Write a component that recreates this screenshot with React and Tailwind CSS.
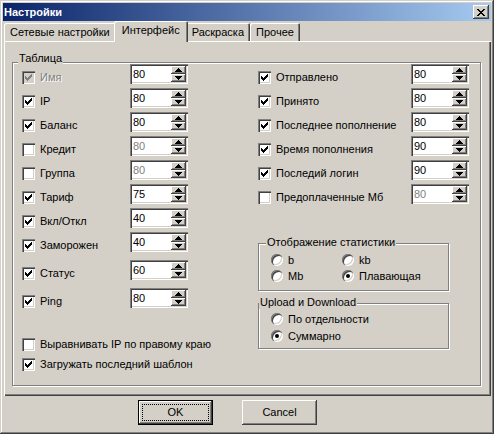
import React from "react";

const CHECK = "M0 2h1v3H0zM1 3h1v3H1zM2 4h1v3H2zM3 3h1v3H3zM4 2h1v3H4zM5 1h1v3H5zM6 0h1v3H6z";
const UP = "M3 0h1v1H3zM2 1h3v1H2zM1 2h5v1H1zM0 3h7v1H0z";
const DOWN = "M0 0h7v1H0zM1 1h5v1H1zM2 2h3v1H2zM3 3h1v1H3z";
const CROSS =
  "M0 0h2v1H0zM6 0h2v1H6zM1 1h2v1H1zM5 1h2v1H5zM2 2h4v1H2zM3 3h2v1H3zM2 4h4v1H2zM1 5h2v1H1zM5 5h2v1H5zM0 6h2v1H0zM6 6h2v1H6z";

const sunken =
  "shadow-[inset_1px_1px_0_#808080,inset_2px_2px_0_#404040,inset_-1px_-1px_0_#fff,inset_-2px_-2px_0_#d4d0c8]";
const raised =
  "shadow-[inset_-1px_-1px_0_#404040,inset_1px_1px_0_#fff,inset_-2px_-2px_0_#808080]";
const etched = "border border-[#808080] shadow-[inset_1px_1px_0_#fff,1px_1px_0_#fff]";

const leftRows = [
  { label: "Имя", value: 80, checked: true, locked: true },
  { label: "IP", value: 80, checked: true },
  { label: "Баланс", value: 80, checked: true },
  { label: "Кредит", value: 80, checked: false, off: true },
  { label: "Группа", value: 80, checked: false, off: true },
  { label: "Тариф", value: 75, checked: true },
  { label: "Вкл/Откл", value: 40, checked: true },
  { label: "Заморожен", value: 40, checked: true },
  { label: "Статус", value: 60, checked: true, gap: true },
  { label: "Ping", value: 80, checked: true, gap: true },
];

const rightRows = [
  { label: "Отправлено", value: 80, checked: true },
  { label: "Принято", value: 80, checked: true },
  { label: "Последнее пополнение", value: 80, checked: true },
  { label: "Время пополнения", value: 90, checked: true },
  { label: "Последий логин", value: 90, checked: true },
  { label: "Предоплаченные Мб", value: 80, checked: false, off: true },
];

function Check({ checked, locked }) {
  return (
    <div
      className={`w-[13px] h-[13px] shrink-0 flex items-center justify-center ${
        locked ? "bg-[#d4d0c8]" : "bg-white"
      } ${sunken}`}
    >
      {checked && (
        <svg width="7" height="7" viewBox="0 0 7 7" shapeRendering="crispEdges">
          <path d={CHECK} fill={locked ? "#808080" : "#000"} />
        </svg>
      )}
    </div>
  );
}

function Radio({ checked }) {
  return (
    <div
      className={`w-[12px] h-[12px] shrink-0 rounded-full bg-white flex items-center justify-center ${sunken}`}
    >
      {checked && <div className="w-[4px] h-[4px] rounded-full bg-black" />}
    </div>
  );
}

function SpinBtn({ d }) {
  return (
    <div className={`w-[15px] h-[8px] flex items-center justify-center bg-[#d4d0c8] ${raised}`}>
      <svg width="7" height="4" viewBox="0 0 7 4" shapeRendering="crispEdges">
        <path d={d} fill="#000" />
      </svg>
    </div>
  );
}

function Spin({ value, off }) {
  return (
    <div className={`flex w-[58px] h-[20px] shrink-0 bg-white ${sunken}`}>
      <span className={`flex-1 flex items-center pl-[3px] ${off ? "text-[#808080]" : "text-black"}`}>
        {value}
      </span>
      <div className="flex flex-col py-[2px] pr-[2px]">
        <SpinBtn d={UP} />
        <SpinBtn d={DOWN} />
      </div>
    </div>
  );
}

function Row({ row, wide }) {
  return (
    <div className={`flex items-end ${row.gap ? "mt-[4px]" : ""}`}>
      <div className={`flex items-center h-[13px] ${wide ? "w-[153px]" : "w-[108px]"}`}>
        <Check checked={row.checked} locked={row.locked} />
        <span
          className={`ml-[5px] whitespace-nowrap ${
            row.locked ? "text-[#808080] [text-shadow:1px_1px_0_#fff]" : ""
          }`}
        >
          {row.label}
        </span>
      </div>
      <Spin value={row.value} off={row.off} />
    </div>
  );
}

function CheckLine({ label, checked }) {
  return (
    <div className="flex items-center h-[13px]">
      <Check checked={checked} />
      <span className="ml-[5px] whitespace-nowrap">{label}</span>
    </div>
  );
}

function RadioLine({ label, checked }) {
  return (
    <div className="flex items-center h-[12px]">
      <Radio checked={checked} />
      <span className="ml-[5px] whitespace-nowrap">{label}</span>
    </div>
  );
}

function Tab({ label, active }) {
  if (active) {
    return (
      <div className="relative z-10 -mx-[2px] -mb-[1px] h-[21px] px-[8px] pt-[3px] bg-[#d4d0c8] rounded-t-[2px] shadow-[inset_1px_1px_0_#fff,inset_-1px_0_0_#404040,inset_-2px_0_0_#808080] whitespace-nowrap">
        {label}
      </div>
    );
  }
  return (
    <div className="h-[18px] px-[6px] pt-[3px] bg-[#d4d0c8] rounded-t-[2px] shadow-[inset_1px_1px_0_#fff,inset_-1px_0_0_#404040,inset_-2px_0_0_#808080] whitespace-nowrap">
      {label}
    </div>
  );
}

export default function App() {
  return (
    <div className="w-[494px] h-[434px] p-[3px] flex flex-col bg-[#d4d0c8] text-black font-['Liberation_Sans',Arial,sans-serif] text-[11px] leading-[13px] shadow-[inset_-1px_-1px_0_#404040,inset_1px_1px_0_#d4d0c8,inset_-2px_-2px_0_#808080,inset_2px_2px_0_#fff]">
      {/* title */}
      <div className="h-[18px] shrink-0 flex items-center justify-between pl-[1px] pr-[2px] bg-[linear-gradient(90deg,#0a246a,#a6caf0)]">
        <span className="font-bold text-white">Настройки</span>
        <div className={`w-[16px] h-[14px] flex items-center justify-center bg-[#d4d0c8] ${raised}`}>
          <svg width="8" height="7" viewBox="0 0 8 7" shapeRendering="crispEdges">
            <path d={CROSS} fill="#000" />
          </svg>
        </div>
      </div>

      <div className="flex flex-col pl-[1px]">
        {/* tabs */}
        <div className="h-[20px] flex items-end">
          <Tab label="Сетевые настройки" />
          <Tab label="Интерфейс" active />
          <Tab label="Раскраска" />
          <Tab label="Прочее" />
        </div>

        {/* panel */}
        <div className="w-[487px] h-[355px] pl-[8px] pt-[21px] shadow-[inset_1px_1px_0_#fff,inset_-1px_-1px_0_#404040,inset_-2px_-2px_0_#808080]">
          <div className={`relative w-[469px] h-[324px] flex pt-[1px] pl-[9px] ${etched}`}>
            <span className="absolute left-[5px] top-[-11px] px-[1px] bg-[#d4d0c8]">Таблица</span>

            <div className="w-[166px] flex flex-col gap-[4px]">
              {leftRows.map((r) => (
                <Row key={r.label} row={r} />
              ))}
              <div className="mt-[26px] flex flex-col gap-[7px]">
                <CheckLine label="Выравнивать IP по правому краю" checked={false} />
                <CheckLine label="Загружать последний шаблон" checked />
              </div>
            </div>

            <div className="ml-[70px] w-[211px] flex flex-col">
              <div className="flex flex-col gap-[4px]">
                {rightRows.map((r) => (
                  <Row key={r.label} row={r} wide />
                ))}
              </div>

              <div className={`relative mt-[39px] w-[191px] h-[48px] pt-[10px] pl-[12px] ${etched}`}>
                <span className="absolute left-[7px] top-[-8px] px-[1px] bg-[#d4d0c8]">
                  Отображение статистики
                </span>
                <div className="grid grid-cols-[71px_1fr] gap-y-[4px]">
                  <RadioLine label="b" />
                  <RadioLine label="kb" />
                  <RadioLine label="Mb" />
                  <RadioLine label="Плавающая" checked />
                </div>
              </div>

              <div className={`relative mt-[12px] w-[191px] h-[46px] pt-[9px] pl-[12px] ${etched}`}>
                <span className="absolute left-[0px] top-[-8px] px-[1px] bg-[#d4d0c8]">
                  Upload и Download
                </span>
                <div className="flex flex-col gap-[5px]">
                  <RadioLine label="По отдельности" />
                  <RadioLine label="Суммарно" checked />
                </div>
              </div>
            </div>
          </div>
        </div>
      </div>

      {/* buttons */}
      <div className="mt-[4px] pl-[135px] flex gap-[29px]">
        <div className="w-[75px] h-[25px] flex border border-black">
          <div className={`flex-1 flex p-[3px] ${raised}`}>
            <div className="flex-1 flex items-center justify-center border border-dotted border-black">
              OK
            </div>
          </div>
        </div>
        <div className={`w-[75px] h-[25px] flex items-center justify-center ${raised}`}>Cancel</div>
      </div>
    </div>
  );
}
